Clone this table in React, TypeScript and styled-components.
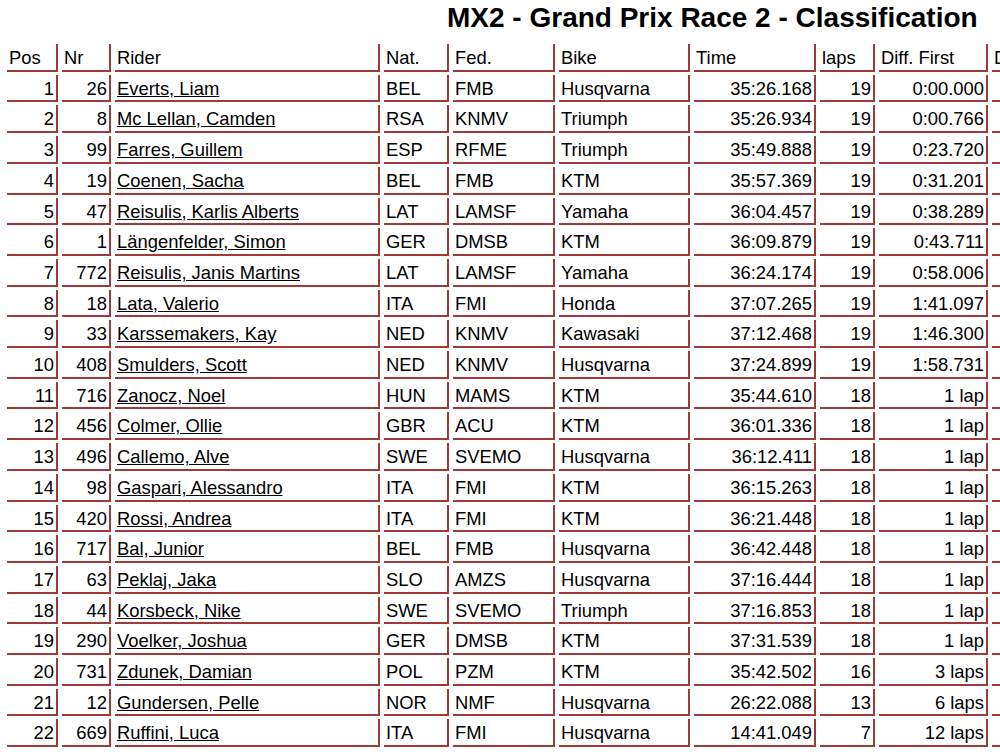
import React from "react";
import styled, { createGlobalStyle } from "styled-components";

const GlobalStyle = createGlobalStyle`
  html, body {
    margin: 0;
    padding: 0;
    background: #ffffff;
    overflow: hidden;
  }
  body {
    font-family: "Liberation Sans", Arial, sans-serif;
    color: #000000;
  }
`;

const Page = styled.div`
  display: flex;
  flex-direction: column;
  align-items: flex-start;
`;

const Title = styled.h1`
  margin: 0 0 7px 447px;
  padding-top: 2px;
  font-size: 28px;
  line-height: 32px;
  font-weight: bold;
  white-space: nowrap;
`;

const Table = styled.table`
  margin-left: 3px;
  border-collapse: separate;
  border-spacing: 4px 3px;
  table-layout: fixed;
  width: 1103px;
  font-size: 18.4px;
`;

const HeadCell = styled.th<{ $w: number }>`
  box-sizing: border-box;
  width: ${(p) => p.$w}px;
  height: 27.7px;
  padding: 2px 2px 0 2px;
  line-height: 23.7px;
  font-weight: normal;
  text-align: left;
  white-space: nowrap;
  overflow: hidden;
  border-right: 2px solid #9e3a3c;
  border-bottom: 2px solid #9e3a3c;
`;

const Cell = styled.td<{ $right?: boolean }>`
  box-sizing: border-box;
  height: 27.7px;
  padding: 2px 2px 0 2px;
  line-height: 23.7px;
  text-align: ${(p) => (p.$right ? "right" : "left")};
  white-space: nowrap;
  overflow: hidden;
  border-right: 2px solid #9e3a3c;
  border-bottom: 2px solid #9e3a3c;
`;

const RiderLink = styled.a`
  color: #000000;
  text-decoration: underline;
`;

type Row = {
  pos: number;
  nr: number;
  rider: string;
  nat: string;
  fed: string;
  bike: string;
  time: string;
  laps: number;
  diff: string;
};

const rows: Row[] = [
  { pos: 1, nr: 26, rider: "Everts, Liam", nat: "BEL", fed: "FMB", bike: "Husqvarna", time: "35:26.168", laps: 19, diff: "0:00.000" },
  { pos: 2, nr: 8, rider: "Mc Lellan, Camden", nat: "RSA", fed: "KNMV", bike: "Triumph", time: "35:26.934", laps: 19, diff: "0:00.766" },
  { pos: 3, nr: 99, rider: "Farres, Guillem", nat: "ESP", fed: "RFME", bike: "Triumph", time: "35:49.888", laps: 19, diff: "0:23.720" },
  { pos: 4, nr: 19, rider: "Coenen, Sacha", nat: "BEL", fed: "FMB", bike: "KTM", time: "35:57.369", laps: 19, diff: "0:31.201" },
  { pos: 5, nr: 47, rider: "Reisulis, Karlis Alberts", nat: "LAT", fed: "LAMSF", bike: "Yamaha", time: "36:04.457", laps: 19, diff: "0:38.289" },
  { pos: 6, nr: 1, rider: "Längenfelder, Simon", nat: "GER", fed: "DMSB", bike: "KTM", time: "36:09.879", laps: 19, diff: "0:43.711" },
  { pos: 7, nr: 772, rider: "Reisulis, Janis Martins", nat: "LAT", fed: "LAMSF", bike: "Yamaha", time: "36:24.174", laps: 19, diff: "0:58.006" },
  { pos: 8, nr: 18, rider: "Lata, Valerio", nat: "ITA", fed: "FMI", bike: "Honda", time: "37:07.265", laps: 19, diff: "1:41.097" },
  { pos: 9, nr: 33, rider: "Karssemakers, Kay", nat: "NED", fed: "KNMV", bike: "Kawasaki", time: "37:12.468", laps: 19, diff: "1:46.300" },
  { pos: 10, nr: 408, rider: "Smulders, Scott", nat: "NED", fed: "KNMV", bike: "Husqvarna", time: "37:24.899", laps: 19, diff: "1:58.731" },
  { pos: 11, nr: 716, rider: "Zanocz, Noel", nat: "HUN", fed: "MAMS", bike: "KTM", time: "35:44.610", laps: 18, diff: "1 lap" },
  { pos: 12, nr: 456, rider: "Colmer, Ollie", nat: "GBR", fed: "ACU", bike: "KTM", time: "36:01.336", laps: 18, diff: "1 lap" },
  { pos: 13, nr: 496, rider: "Callemo, Alve", nat: "SWE", fed: "SVEMO", bike: "Husqvarna", time: "36:12.411", laps: 18, diff: "1 lap" },
  { pos: 14, nr: 98, rider: "Gaspari, Alessandro", nat: "ITA", fed: "FMI", bike: "KTM", time: "36:15.263", laps: 18, diff: "1 lap" },
  { pos: 15, nr: 420, rider: "Rossi, Andrea", nat: "ITA", fed: "FMI", bike: "KTM", time: "36:21.448", laps: 18, diff: "1 lap" },
  { pos: 16, nr: 717, rider: "Bal, Junior", nat: "BEL", fed: "FMB", bike: "Husqvarna", time: "36:42.448", laps: 18, diff: "1 lap" },
  { pos: 17, nr: 63, rider: "Peklaj, Jaka", nat: "SLO", fed: "AMZS", bike: "Husqvarna", time: "37:16.444", laps: 18, diff: "1 lap" },
  { pos: 18, nr: 44, rider: "Korsbeck, Nike", nat: "SWE", fed: "SVEMO", bike: "Triumph", time: "37:16.853", laps: 18, diff: "1 lap" },
  { pos: 19, nr: 290, rider: "Voelker, Joshua", nat: "GER", fed: "DMSB", bike: "KTM", time: "37:31.539", laps: 18, diff: "1 lap" },
  { pos: 20, nr: 731, rider: "Zdunek, Damian", nat: "POL", fed: "PZM", bike: "KTM", time: "35:42.502", laps: 16, diff: "3 laps" },
  { pos: 21, nr: 12, rider: "Gundersen, Pelle", nat: "NOR", fed: "NMF", bike: "Husqvarna", time: "26:22.088", laps: 13, diff: "6 laps" },
  { pos: 22, nr: 669, rider: "Ruffini, Luca", nat: "ITA", fed: "FMI", bike: "Husqvarna", time: "14:41.049", laps: 7, diff: "12 laps" },
];

const columns: { label: string; w: number }[] = [
  { label: "Pos", w: 51 },
  { label: "Nr", w: 49 },
  { label: "Rider", w: 265 },
  { label: "Nat.", w: 65 },
  { label: "Fed.", w: 102 },
  { label: "Bike", w: 131 },
  { label: "Time", w: 122 },
  { label: "laps", w: 55 },
  { label: "Diff. First", w: 109 },
  { label: "D", w: 110 },
];

export default function App() {
  return (
    <>
      <GlobalStyle />
      <Page>
        <Title>MX2 - Grand Prix Race 2 - Classification</Title>
        <Table>
          <thead>
            <tr>
              {columns.map((c) => (
                <HeadCell key={c.label} $w={c.w}>
                  {c.label}
                </HeadCell>
              ))}
            </tr>
          </thead>
          <tbody>
            {rows.map((r) => (
              <tr key={r.pos}>
                <Cell $right>{r.pos}</Cell>
                <Cell $right>{r.nr}</Cell>
                <Cell>
                  <RiderLink href="#">{r.rider}</RiderLink>
                </Cell>
                <Cell>{r.nat}</Cell>
                <Cell>{r.fed}</Cell>
                <Cell>{r.bike}</Cell>
                <Cell $right>{r.time}</Cell>
                <Cell $right>{r.laps}</Cell>
                <Cell $right>{r.diff}</Cell>
                <Cell $right />
              </tr>
            ))}
          </tbody>
        </Table>
      </Page>
    </>
  );
}
